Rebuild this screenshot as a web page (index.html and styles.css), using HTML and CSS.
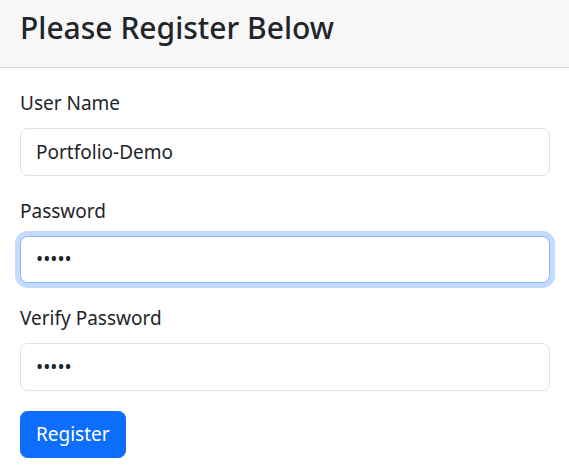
FILE: index.html
```html
<!DOCTYPE html>
<html lang="en">
<head>
<meta charset="utf-8">
<title>Register</title>
<link rel="stylesheet" href="styles.css">
</head>
<body>
<div class="card">
  <div class="card-header">
    <h4 class="title">Please Register Below</h4>
  </div>
  <div class="card-body">
    <div class="field">
      <label class="label" for="user">User Name</label>
      <input class="control" id="user" type="text" value="Portfolio-Demo">
    </div>
    <div class="field">
      <label class="label" for="pw">Password</label>
      <input class="control focused" id="pw" type="password" value="12345">
    </div>
    <div class="field">
      <label class="label" for="pw2">Verify Password</label>
      <input class="control" id="pw2" type="password" value="12345">
    </div>
    <button class="btn" type="button">Register</button>
  </div>
</div>
</body>
</html>
```
FILE: styles.css
```css
* { box-sizing: border-box; }
html, body {
  margin: 0;
  padding: 0;
  background: #fff;
}
body {
  font-family: "Noto Sans", "Open Sans", sans-serif;
  font-size: 19px;
  line-height: 30px;
  color: #212529;
}
.card {
  width: 569px;
}
.card-header {
  background: #f7f7f7;
  border-bottom: 1px solid #d6d6d6;
  padding: 10px 20px 11px;
}
.title {
  margin: 0 0 10px;
  font-size: 30px;
  font-weight: 500;
  line-height: 36px;
}
.card-body {
  padding: 20px 19px 20px 20px;
}
.field {
  display: flex;
  flex-direction: column;
  margin-bottom: 20px;
}
.label {
  margin-bottom: 10px;
  line-height: 30px;
}
.control {
  font: inherit;
  color: #212529;
  height: 47.5px;
  padding: 7.5px 15px;
  border: 1.25px solid #dee2e6;
  border-radius: 7.5px;
  background: #fff;
  outline: none;
}
.control.focused {
  border-color: #86b7fe;
  box-shadow: 0 0 0 5px rgba(13, 110, 253, 0.25);
}
.btn {
  font: inherit;
  color: #fff;
  background: #0d6efd;
  border: 1.25px solid #0d6efd;
  border-radius: 7.5px;
  height: 47.5px;
  padding: 7.5px 15px;
  cursor: pointer;
}
```
